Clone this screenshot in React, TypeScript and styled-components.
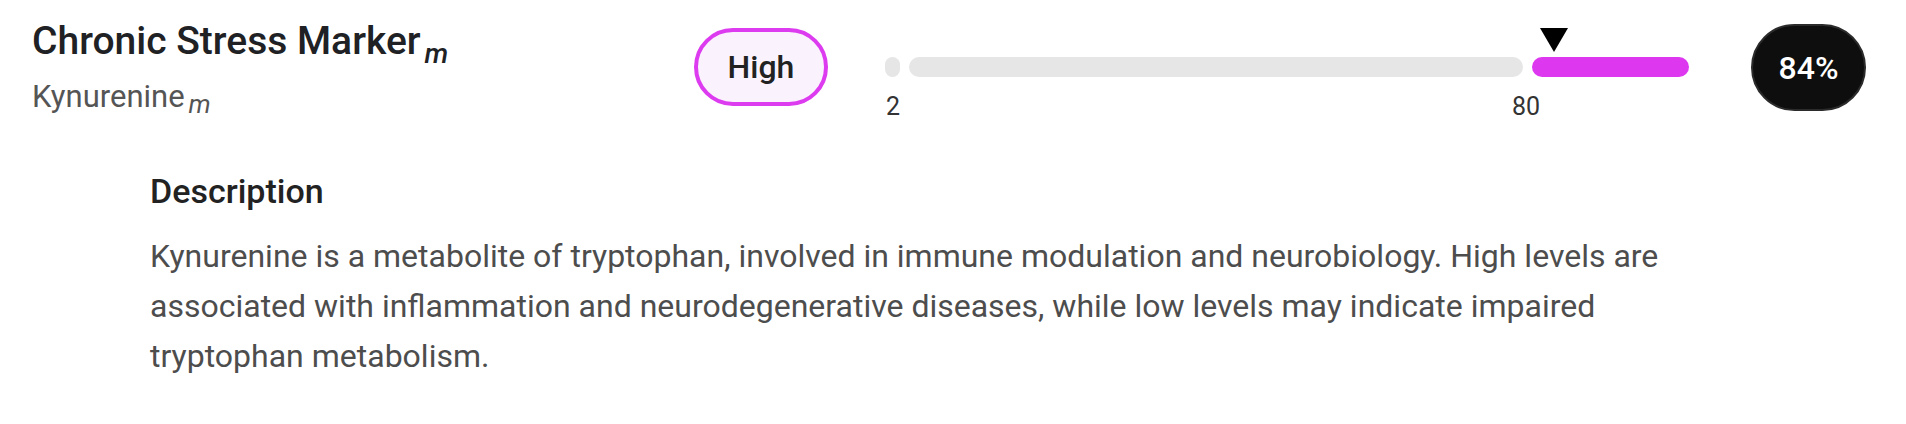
import React from "react";
import styled, { createGlobalStyle } from "styled-components";

const GlobalStyle = createGlobalStyle`
  html, body { margin: 0; padding: 0; background: #ffffff; }
  body { font-family: Roboto, "Noto Sans", Arial, sans-serif; -webkit-font-smoothing: antialiased; }
`;

const Card = styled.div`
  width: 1906px;
  box-sizing: border-box;
`;

const HeaderRow = styled.div`
  display: flex;
  align-items: flex-start;
  padding: 19px 40px 0 32px;
`;

const NameBlock = styled.div`
  flex: 1;
  min-width: 0;
`;

const Title = styled.div`
  font-size: 39px;
  line-height: 44px;
  font-weight: 500;
  color: #202124;
  white-space: nowrap;
`;

const Subtitle = styled.div`
  margin-top: 16px;
  font-size: 31px;
  line-height: 36px;
  font-weight: 400;
  color: #555555;
  white-space: nowrap;
`;

const Unit = styled.sub<{ $size: number; $drop: number }>`
  font-size: ${(p) => p.$size}px;
  font-style: italic;
  line-height: 0;
  vertical-align: -${(p) => p.$drop}px;
  margin-left: 4px;
`;

const LevelPill = styled.div`
  box-sizing: border-box;
  margin-top: 9px;
  width: 134px;
  height: 78px;
  border: 4px solid #dd3bef;
  border-radius: 39px;
  background: #faf3fe;
  display: flex;
  align-items: center;
  justify-content: center;
  font-size: 32px;
  font-weight: 500;
  color: #222222;
`;

const Scale = styled.div`
  position: relative;
  width: 805px;
  margin-left: 57px;
  margin-top: 38px;
`;

const Track = styled.div`
  display: flex;
  gap: 9px;
`;

const Segment = styled.div<{ $w: number; $color: string }>`
  flex: 0 0 ${(p) => p.$w}px;
  height: 20px;
  border-radius: 10px;
  background: ${(p) => p.$color};
`;

const Marker = styled.div<{ $left: number }>`
  position: absolute;
  top: -29px;
  left: ${(p) => p.$left}px;
  width: 0;
  height: 0;
  border-left: 14.5px solid transparent;
  border-right: 14.5px solid transparent;
  border-top: 24px solid #000000;
`;

const Ticks = styled.div`
  position: relative;
  height: 26px;
  margin-top: 17px;
`;

const Tick = styled.span<{ $left: number }>`
  position: absolute;
  top: 0;
  left: ${(p) => p.$left}px;
  font-size: 25px;
  line-height: 26px;
  color: #333333;
`;

const ScorePill = styled.div`
  box-sizing: border-box;
  margin-top: 5px;
  margin-left: 61px;
  width: 115px;
  height: 87px;
  border-radius: 44px;
  background: #0e0e0e;
  border: 2px solid #2b2b2b;
  display: flex;
  align-items: center;
  justify-content: center;
  font-size: 32px;
  font-weight: 500;
  color: #ffffff;
`;

const Details = styled.div`
  padding: 51px 206px 0 150px;
`;

const SectionTitle = styled.div`
  font-size: 34px;
  line-height: 40px;
  font-weight: 500;
  color: #222222;
`;

const Body = styled.p`
  margin: 20px 0 0 0;
  font-size: 32px;
  line-height: 50px;
  color: #4d4d4d;
`;

export default function App() {
  return (
    <>
      <GlobalStyle />
      <Card>
        <HeaderRow>
          <NameBlock>
            <Title>
              Chronic Stress Marker
              <Unit $size={28} $drop={9}>m</Unit>
            </Title>
            <Subtitle>
              Kynurenine
              <Unit $size={26} $drop={6}>m</Unit>
            </Subtitle>
          </NameBlock>
          <LevelPill>High</LevelPill>
          <Scale>
            <Marker $left={655} />
            <Track>
              <Segment $w={15} $color="#e6e6e6" />
              <Segment $w={614} $color="#e6e6e6" />
              <Segment $w={157} $color="#dd38f0" />
            </Track>
            <Ticks>
              <Tick $left={1}>2</Tick>
              <Tick $left={627}>80</Tick>
            </Ticks>
          </Scale>
          <ScorePill>84%</ScorePill>
        </HeaderRow>
        <Details>
          <SectionTitle>Description</SectionTitle>
          <Body>
            Kynurenine is a metabolite of tryptophan, involved in immune modulation and
            neurobiology. High levels are associated with inflammation and neurodegenerative
            diseases, while low levels may indicate impaired tryptophan metabolism.
          </Body>
        </Details>
      </Card>
    </>
  );
}
